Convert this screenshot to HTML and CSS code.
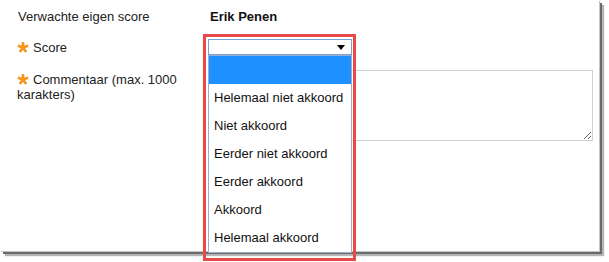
FILE: index.html
```html
<!DOCTYPE html>
<html lang="nl">
<head>
    <meta charset="UTF-8" />
    <title>Score</title>
    <link rel="stylesheet" href="styles.css">
</head>
<body>
    <div class="page">
        <div class="form">
            <div class="label">Verwachte eigen score</div>
            <div class="value name">Erik Penen</div>

            <div class="label middle">
                <svg class="star" width="12" height="12" viewBox="0 0 12 12"><path d="M6 6.5V1M6 6.5L11.2 4.8M6 6.5L9.2 11M6 6.5L2.8 11M6 6.5L0.8 4.8" /></svg>Score
            </div>
            <div class="value">
                <div class="dropdown">
                    <div class="select">
                        <svg class="arrow" width="8" height="5" viewBox="0 0 8 5"><path d="M0 0H8L4 5Z" /></svg>
                    </div>
                    <ul class="options">
                        <li class="active"></li>
                        <li>Helemaal niet akkoord</li>
                        <li>Niet akkoord</li>
                        <li>Eerder niet akkoord</li>
                        <li>Eerder akkoord</li>
                        <li>Akkoord</li>
                        <li>Helemaal akkoord</li>
                    </ul>
                    <div class="highlight"></div>
                </div>
            </div>

            <div class="label top">
                <svg class="star" width="12" height="12" viewBox="0 0 12 12"><path d="M6 6.5V1M6 6.5L11.2 4.8M6 6.5L9.2 11M6 6.5L2.8 11M6 6.5L0.8 4.8" /></svg>Commentaar (max. 1000 karakters)
            </div>
            <div class="value">
                <textarea class="comment"></textarea>
            </div>
        </div>
    </div>
</body>
</html>
```

FILE: styles.css
```css
* {
    margin: 0;
    padding: 0;
    box-sizing: border-box;
}

body {
    background-color: #fff;
    font-family: "Liberation Sans", Arial, sans-serif;
    font-size: 13px;
    line-height: 15px;
    color: #222;
    overflow: hidden;
    height: 262px;
}

.page {
    width: 599px;
    height: 251px;
    background-color: #fff;
    box-shadow: 1px 1px 0 #c4c4c4, 3px 3px 0 #6a6a6a, 5px 5px 1px #b4b4b4;
}

.form {
    display: grid;
    grid-template-columns: 191px 1fr;
    row-gap: 15px;
    padding: 9px 0 0 17px;
}

.label {
    padding-left: 1px;
}

.label.middle {
    align-self: center;
    padding-left: 0;
}

.label.top {
    padding: 2px 0 0 0;
}

.star {
    display: inline-block;
    vertical-align: -1px;
    margin-right: 4px;
}

.star path {
    fill: none;
    stroke: #f7941d;
    stroke-width: 2.6;
}

.name {
    font-weight: bold;
    padding-left: 2px;
    color: #111;
}

.dropdown {
    position: relative;
    width: 144px;
    height: 16px;
}

.select {
    height: 16px;
    border: 1px solid #7ba0d8;
    background-color: #fff;
    display: flex;
    justify-content: flex-end;
    align-items: center;
    padding-right: 6px;
}

.arrow path {
    fill: #000;
}

.options {
    position: absolute;
    top: 16px;
    left: 0;
    width: 144px;
    list-style: none;
    background-color: #fff;
    border: 1px solid #9aafca;
    z-index: 2;
}

.options li {
    height: 28px;
    line-height: 28px;
    padding-left: 5px;
    color: #111;
}

.options li.active {
    background-color: #1e90ff;
}

.highlight {
    position: absolute;
    left: -5px;
    top: -5px;
    width: 153px;
    height: 227px;
    border: 3px solid #e84a4a;
    z-index: 3;
}

.comment {
    display: block;
    width: 385px;
    height: 71px;
    border: 1px solid #d0d0d0;
    resize: both;
    font-family: inherit;
}
```
